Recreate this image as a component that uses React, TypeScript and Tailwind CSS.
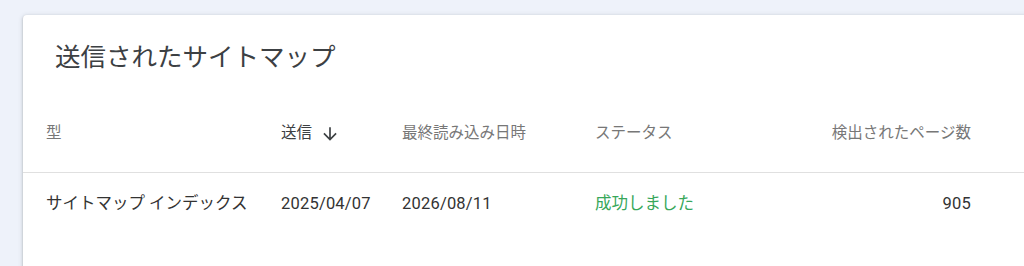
import * as React from "react"

const font = { fontFamily: '"Roboto", "Noto Sans CJK JP", sans-serif' }

function ArrowDown() {
  return (
    <svg width="20" height="20" viewBox="0 0 24 24" className="fill-[#3c4043]">
      <path d="M20 12l-1.41-1.41L13 16.17V4h-2v12.17l-5.58-5.59L4 12l8 8 8-8z" />
    </svg>
  )
}

export default function App() {
  return (
    <div className="h-[266px] w-[1024px] overflow-hidden bg-[#eef2fa] pl-[23px] pt-[15px]" style={font}>
      <div className="h-[300px] w-[1040px] rounded-tl-[4px] bg-white pt-[26px] shadow-[0_1px_2px_0_rgba(60,64,67,0.3),0_1px_4px_1px_rgba(60,64,67,0.15)]">
        <h2 className="h-[32px] pl-[32px] text-[25.5px] leading-[32px] text-[#3c4043]">
          送信されたサイトマップ
        </h2>

        <div className="mt-[22px] grid h-[78px] grid-cols-[235px_121px_193px_376px] items-center border-b border-[#e0e0e0] pl-[23px] text-[15.5px] text-[#777777]">
          <div>型</div>
          <div className="flex items-center gap-[8px] text-[#3c4043]">
            <span>送信</span>
            <ArrowDown />
          </div>
          <div>最終読み込み日時</div>
          <div className="flex justify-between">
            <span>ステータス</span>
            <span>検出されたページ数</span>
          </div>
        </div>

        <div className="grid h-[62px] grid-cols-[235px_121px_193px_376px] items-center pl-[23px] text-[16.5px] text-[#333333]">
          <div>サイトマップ インデックス</div>
          <div className="tracking-[0.2px]">2025/04/07</div>
          <div className="tracking-[0.2px]">2026/08/11</div>
          <div className="flex justify-between">
            <span className="text-[#37a75a]">成功しました</span>
            <span className="tracking-[0.2px]">905</span>
          </div>
        </div>
      </div>
    </div>
  )
}
